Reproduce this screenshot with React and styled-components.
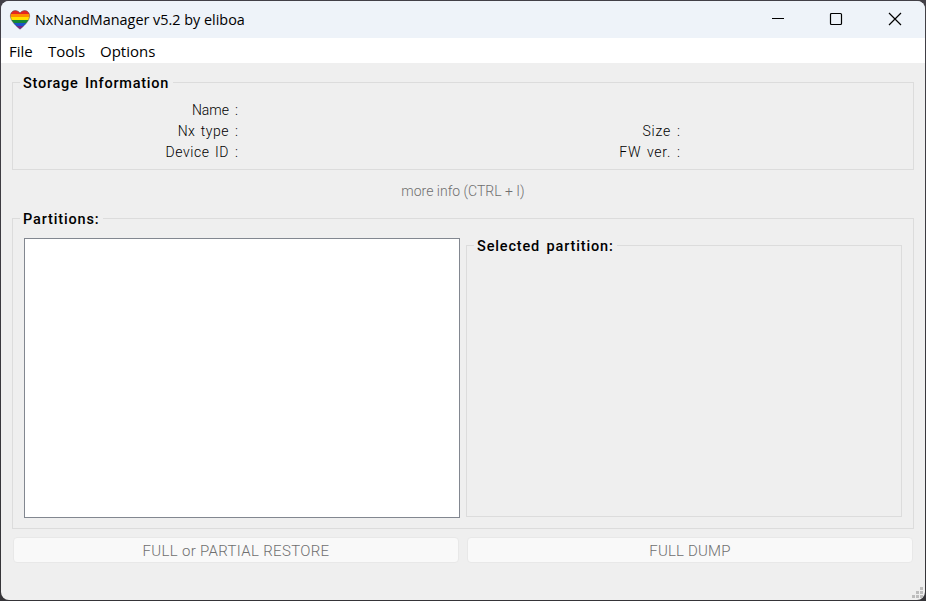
import React from "react";
import styled, { createGlobalStyle } from "styled-components";

const GlobalStyle = createGlobalStyle`
  * { box-sizing: border-box; }
  body { margin: 0; background: #38353a; overflow: hidden; }
`;

const Desktop = styled.div`
  width: 926px;
  height: 601px;
  padding: 1px;
  background: linear-gradient(#424047, #353438);
`;

const Window = styled.div`
  display: flex;
  flex-direction: column;
  height: 599px;
  border-radius: 8px;
  overflow: hidden;
  background: #efefef;
  color: #000;
  font: 300 14px/21px Roboto, "Liberation Sans", sans-serif;
  white-space: nowrap;
`;

const TitleBar = styled.header`
  display: flex;
  align-items: center;
  height: 37px;
  padding: 0 1px 0 8px;
  background: #eef3f9;
`;

const Title = styled.h1`
  flex: 1;
  margin: 0 0 0 4px;
  font: 400 14.4px/20px "Open Sans", "Noto Sans", sans-serif;
`;

const Caption = styled.button`
  display: flex;
  align-items: center;
  justify-content: center;
  align-self: flex-start;
  width: 58.5px;
  height: 36px;
  padding: 0;
  border: 0;
  background: none;
`;

const MenuBar = styled.nav`
  display: flex;
  height: 25px;
  padding-left: 8px;
  background: #fff;
`;

const MenuItem = styled.span`
  width: ${(p) => p.$width}px;
  font: 400 15px/26px "Open Sans", "Noto Sans", sans-serif;
`;

const Content = styled.main`
  display: flex;
  flex-direction: column;
  flex: 1;
  padding: 19px 11px 0;
`;

const Group = styled.section`
  height: ${(p) => p.$height}px;
  border: 1px solid #dcdcdc;
`;

const Legend = styled.h2`
  width: ${(p) => p.$width}px;
  height: 19px;
  margin: -9px 0 -3px 7px;
  padding-left: 3px;
  background: #efefef;
  font: 500 14.5px/19px Roboto, "Liberation Sans", sans-serif;
  letter-spacing: ${(p) => p.$spacing}px;
  word-spacing: 2px;
`;

const Fields = styled.div`
  display: grid;
  grid-template-columns: 225px 442px;
  grid-auto-rows: 21px;
  padding-top: 10px;
`;

const Field = styled.span`
  display: flex;
  justify-content: flex-end;
  grid-column: ${(p) => p.$column};
  grid-row: ${(p) => p.$row};
  letter-spacing: ${(p) => p.$spacing}px;
  word-spacing: 1.5px;
`;

const Colon = styled.span`
  width: 9px;
  line-height: 20px;
  letter-spacing: 0;
  text-align: right;
`;

const Hint = styled.p`
  height: 48px;
  margin: 0;
  color: #6f6f6f;
  line-height: 43px;
  text-align: center;
`;

const Panes = styled.div`
  display: flex;
  gap: 6px;
  padding: 12px 11px 0;
`;

const PartitionList = styled.div`
  width: 436px;
  height: 280px;
  border: 1px solid #828790;
  background: #fff;
`;

const Detail = styled.div`
  flex: 1;
  padding-top: 7px;
`;

const Actions = styled.div`
  display: flex;
  gap: 8px;
  margin: 8px 1px 0;
`;

const ActionButton = styled.button`
  flex: 1;
  height: 26px;
  padding: 2px 0 0;
  border: 1px solid #e8e8e8;
  border-radius: 4px;
  background: #f9f9f9;
  color: #6f6f6f;
  font: 300 15px/22px Roboto, "Liberation Sans", sans-serif;
  letter-spacing: ${(p) => p.$spacing}px;
`;

const StatusBar = styled.footer`
  display: flex;
  justify-content: flex-end;
  align-items: flex-end;
  height: 16px;
  padding: 0 2px 2px 0;
`;

const heartPath =
  "M11 4C8.500.5 2.800.5 1.500 5.500.6 10 4.500 15 11 20.200 17.500 15 21.400 10 20.500 5.500 19.200.5 13.500.5 11 4Z";

const Heart = () => (
  <svg width="22" height="22" viewBox="0 0 22 22">
    <defs>
      <clipPath id="heart">
        <path d={heartPath} />
      </clipPath>
    </defs>
    <g clipPath="url(#heart)">
      <path fill="#e52620" d="M0 0h22v5H0z" />
      <path fill="#ff8c00" d="M0 5h22v3H0z" />
      <path fill="#ffe000" d="M0 8h22v3H0z" />
      <path fill="#168735" d="M0 11h22v3H0z" />
      <path fill="#1954c8" d="M0 14h22v3H0z" />
      <path fill="#75218b" d="M0 17h22v5H0z" />
    </g>
    <path d={heartPath} fill="none" stroke="#554348" strokeOpacity=".65" strokeWidth=".8" />
  </svg>
);

const CaptionIcon = ({ children }) => (
  <svg width="14" height="14" viewBox="0 0 14 14" fill="none" stroke="#000" strokeWidth="1.2">
    {children}
  </svg>
);

const fields = [
  ["Name", 1, 1, 0],
  ["Nx type", 1, 2, 0.5],
  ["Device ID", 1, 3, 0.55],
  ["Size", 2, 2, 0.8],
  ["FW ver.", 2, 3, 0.75],
];

const dots = [[8, 0], [4, 4], [8, 4], [0, 8], [4, 8], [8, 8]];

export default function App() {
  return (
    <Desktop>
      <GlobalStyle />
      <Window>
        <TitleBar>
          <Heart />
          <Title>NxNandManager v5.2 by eliboa</Title>
          <Caption aria-label="Minimize">
            <CaptionIcon><path d="M1 6.500h12" strokeWidth="1" /></CaptionIcon>
          </Caption>
          <Caption aria-label="Maximize">
            <CaptionIcon><rect x="1.500" y="1.500" width="11" height="11" rx="1" /></CaptionIcon>
          </Caption>
          <Caption aria-label="Close">
            <CaptionIcon><path d="m1 1 12 12M13 1 1 13" /></CaptionIcon>
          </Caption>
        </TitleBar>
        <MenuBar>
          <MenuItem $width={39}>File</MenuItem>
          <MenuItem $width={52}>Tools</MenuItem>
          <MenuItem $width={60}>Options</MenuItem>
        </MenuBar>
        <Content>
          <Group $height={88}>
            <Legend $width={153} $spacing={0.75}>Storage Information</Legend>
            <Fields>
              {fields.map(([text, column, row, spacing]) => (
                <Field key={text} $column={column} $row={row} $spacing={spacing}>
                  {text}
                  <Colon>:</Colon>
                </Field>
              ))}
            </Fields>
          </Group>
          <Hint>more info (CTRL + I)</Hint>
          <Group $height={311}>
            <Legend $width={83} $spacing={0.85}>Partitions:</Legend>
            <Panes>
              <PartitionList />
              <Detail>
                <Group $height={272}>
                  <Legend $width={143} $spacing={0.85}>Selected partition:</Legend>
                </Group>
              </Detail>
            </Panes>
          </Group>
          <Actions>
            <ActionButton disabled $spacing={0.33}>FULL or PARTIAL RESTORE</ActionButton>
            <ActionButton disabled $spacing={0.2}>FULL DUMP</ActionButton>
          </Actions>
        </Content>
        <StatusBar>
          <svg width="11" height="11" viewBox="0 0 11 11" fill="#bdbdbd">
            {dots.map(([x, y]) => <rect key={`${x}-${y}`} x={x} y={y} width="3" height="3" />)}
          </svg>
        </StatusBar>
      </Window>
    </Desktop>
  );
}
